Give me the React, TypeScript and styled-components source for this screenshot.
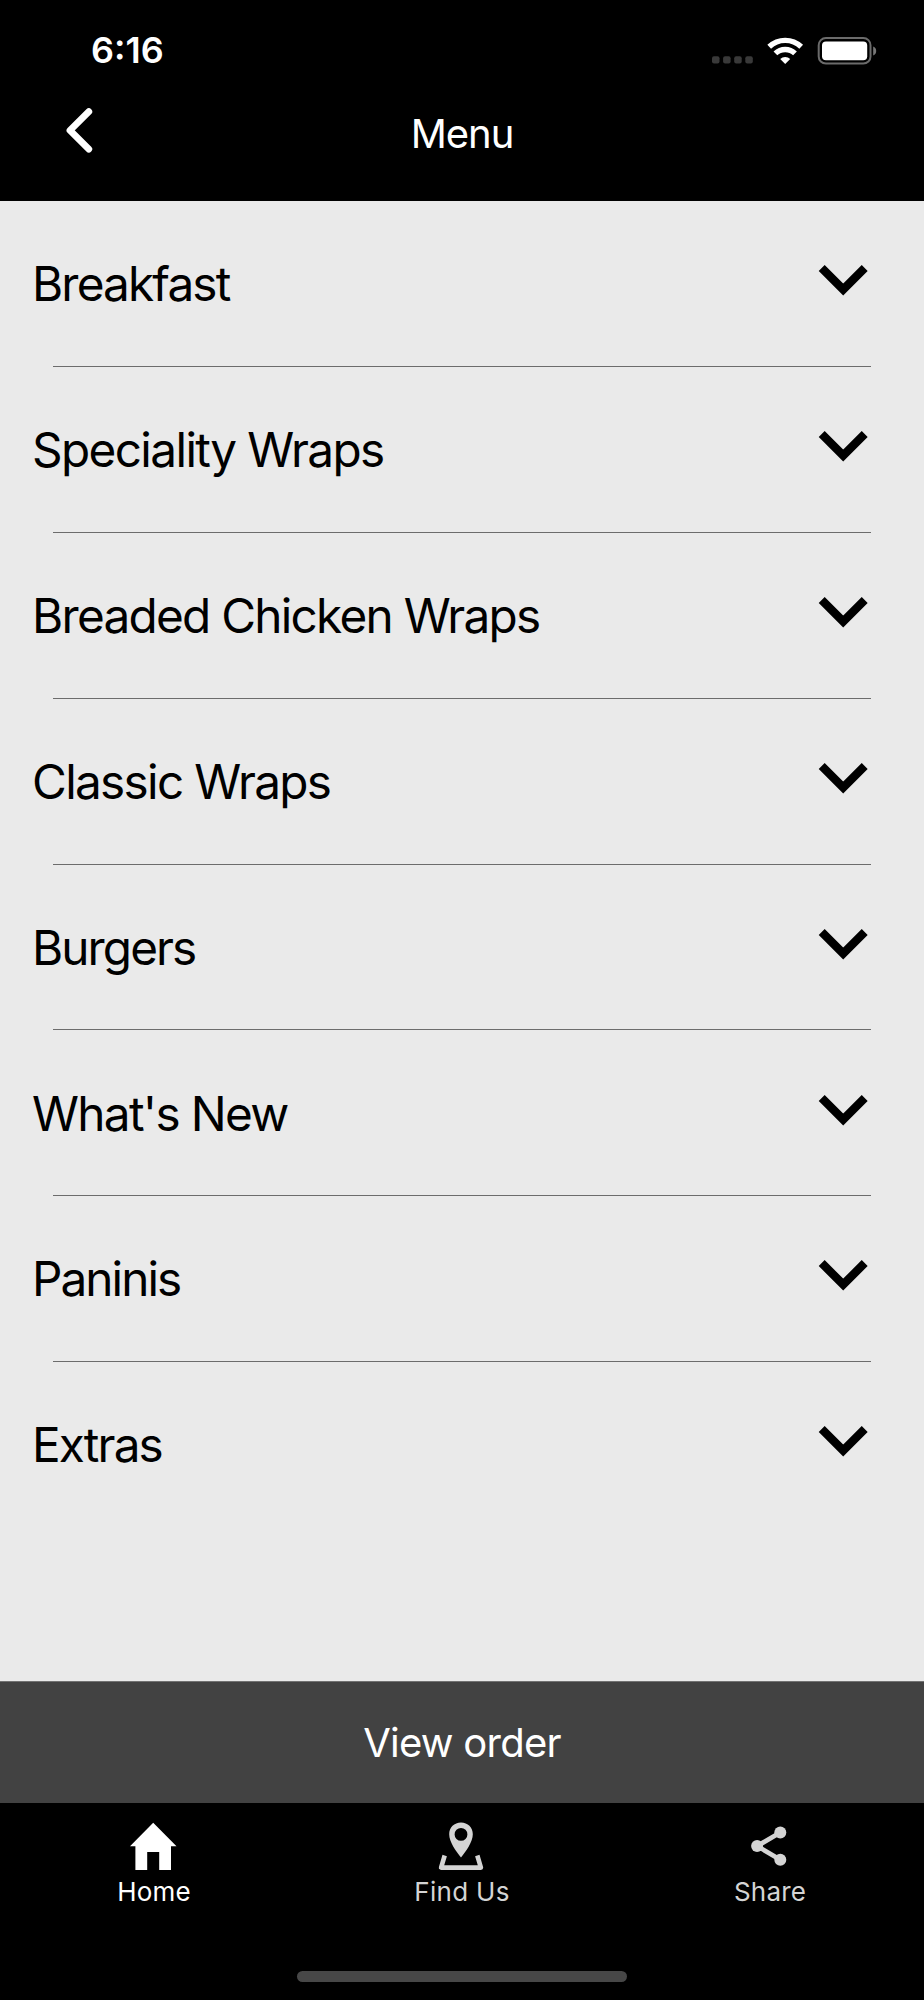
import React from "react";
import styled, { createGlobalStyle } from "styled-components";

const GlobalStyle = createGlobalStyle`
  * { box-sizing: border-box; }
  body { margin: 0; background: #000; }
  button { font: inherit; color: inherit; background: none; border: 0; margin: 0; padding: 0; }
  svg { display: block; }
`;

const Screen = styled.div`
  display: flex;
  flex-direction: column;
  width: 924px;
  height: 2000px;
  overflow: hidden;
  background: #000;
  font-family: Inter, "Liberation Sans", sans-serif;
`;

const StatusBar = styled.div`
  display: flex;
  align-items: center;
  justify-content: space-between;
  height: 101px;
  padding: 0 47px 0 91px;
  color: #fff;
`;

const Clock = styled.span`
  margin-bottom: 1px;
  font-size: 36px;
  font-weight: 600;
  line-height: 44px;
`;

const NavBar = styled.header`
  display: grid;
  grid-template-columns: 160px 1fr 160px;
  height: 100px;
  padding-bottom: 34px;
  align-items: center;
  color: #fff;
`;

const BackButton = styled.button`
  justify-self: start;
  margin: -6px 0 0 66px;
`;

const Title = styled.h1`
  margin: 0;
  text-align: center;
  font-size: 40px;
  font-weight: 400;
  line-height: 48px;
  letter-spacing: -1px;
`;

const MenuList = styled.main`
  flex: 1;
  background: #eaeaea;
`;

const Row = styled.section`
  display: flex;
  flex-direction: column;
  height: 165.9px;
`;

const RowButton = styled.button`
  flex: 1;
  display: flex;
  align-items: center;
  justify-content: space-between;
  padding: 1.4px 56px 0 32px;
  color: #000;

  svg { margin-top: -7px; }
`;

const RowLabel = styled.span<{ $spacing: number }>`
  font-size: 47.7px;
  line-height: 58px;
  white-space: nowrap;
  letter-spacing: ${(p) => p.$spacing}px;
`;

const Divider = styled.div<{ $hidden: boolean }>`
  height: 1px;
  margin: 0 53px;
  background: ${(p) => (p.$hidden ? "transparent" : "#6c6c6c")};
`;

const OrderButton = styled.button`
  height: 122px;
  border-top: 1px solid #727272;
  background: #424242;
  color: #fff;
  font-size: 40px;
  line-height: 48px;
  text-align: center;
  letter-spacing: -0.75px;
`;

const TabBar = styled.nav`
  display: grid;
  grid-template-columns: repeat(3, 1fr);
  height: 168px;
`;

const Tab = styled.button<{ $active?: boolean; $spacing: number }>`
  display: flex;
  flex-direction: column;
  align-items: center;
  padding-top: 19px;
  color: ${(p) => (p.$active ? "#fff" : "#d4d4d4")};
  font-size: 26px;
  line-height: 32px;
  letter-spacing: ${(p) => p.$spacing}px;

  span { margin-top: 2px; }
`;

const HomeIndicator = styled.div`
  width: 330px;
  height: 11px;
  margin: 0 auto 18px;
  border-radius: 6px;
  background: #474747;
`;

const StatusIcons = () => (
  <svg width="166" height="30" viewBox="711 35.5 166 30" fill="none">
    {[712, 723.1, 734.2, 745.3].map((x) => (
      <rect key={x} x={x} y="55.7" width="7.5" height="7.3" rx="2" fill="#393939" />
    ))}
    <g stroke="#fff" strokeWidth="5.4">
      <path d="M769.2 46.2A23.3 23.3 0 0 1 801.2 46.2" />
      <path d="M775.4 52.9A14.2 14.2 0 0 1 795 52.9" />
    </g>
    <path d="M785.2 63.4L780.2 58.4A7.2 7.2 0 0 1 790.2 58.4Z" fill="#fff" />
    <rect x="818.7" y="37.5" width="51.8" height="25.6" rx="7.2" stroke="#6b6b6b" strokeWidth="2" />
    <rect x="822" y="40.9" width="45.2" height="18.8" rx="4" fill="#fff" />
    <path d="M873.2 46C877.2 47.5 877.2 53.5 873.2 55Z" fill="#777" />
  </svg>
);

const BackIcon = () => (
  <svg width="28" height="46" viewBox="0 0 28 46" fill="none">
    <path d="M22.8 3.7L4 22.4L22.8 41.1" stroke="#fff" strokeWidth="6.8" strokeLinecap="round" strokeLinejoin="round" />
  </svg>
);

const ChevronDown = () => (
  <svg width="50" height="31" viewBox="0 0 50 31" fill="none">
    <path d="M3.7 3.1L25.2 24.5L46.7 3.1" stroke="#000" strokeWidth="8.4" />
  </svg>
);

const HomeIcon = () => (
  <svg width="48" height="52" viewBox="1 0 48 52" fill="currentColor">
    <path d="M24.2 .7L47.5 24.3H42V48H30.2V30H18.2V48H6.4V24.3H.9Z" />
  </svg>
);

const PinIcon = () => (
  <svg width="48" height="52" viewBox="1 0 48 52" fill="none">
    <path
      fill="currentColor"
      fillRule="evenodd"
      d="M24 .5C17.2.5 12.2 5.5 12.2 12.2C12.2 20 19 29 24 35.5C29 29 35.8 20 35.8 12.2C35.8 5.5 30.8.5 24 .5ZM24 6A6.4 6.4 0 1 1 24 18.8A6.4 6.4 0 1 1 24 6Z"
    />
    <path d="M7.7 33.5L4.1 45.6H43.9L40.3 33.5" stroke="currentColor" strokeWidth="4.6" strokeLinejoin="round" />
  </svg>
);

const ShareIcon = () => (
  <svg width="48" height="52" viewBox="-0.5 0.4 48 52" fill="currentColor">
    <path d="M33.8 10.8L10.6 24.5L33.8 38.2" fill="none" stroke="currentColor" strokeWidth="4.6" />
    <circle cx="33.8" cy="10.8" r="6" />
    <circle cx="10.6" cy="24.5" r="6" />
    <circle cx="33.8" cy="38.2" r="6" />
  </svg>
);

const categories = [
  { name: "Breakfast", spacing: -1.85 },
  { name: "Speciality Wraps", spacing: -1.62 },
  { name: "Breaded Chicken Wraps", spacing: -1.73 },
  { name: "Classic Wraps", spacing: -1.68 },
  { name: "Burgers", spacing: -1.92 },
  { name: "What's New", spacing: -1.68 },
  { name: "Paninis", spacing: -1.95 },
  { name: "Extras", spacing: -1.88 },
];

export default function App() {
  return (
    <Screen>
      <GlobalStyle />
      <StatusBar>
        <Clock>6:16</Clock>
        <StatusIcons />
      </StatusBar>
      <NavBar>
        <BackButton aria-label="Back">
          <BackIcon />
        </BackButton>
        <Title>Menu</Title>
      </NavBar>
      <MenuList>
        {categories.map((c, i) => (
          <Row key={c.name}>
            <RowButton>
              <RowLabel $spacing={c.spacing}>{c.name}</RowLabel>
              <ChevronDown />
            </RowButton>
            <Divider $hidden={i === categories.length - 1} />
          </Row>
        ))}
      </MenuList>
      <OrderButton>View order</OrderButton>
      <TabBar>
        <Tab $active $spacing={0.2}>
          <HomeIcon />
          <span>Home</span>
        </Tab>
        <Tab $spacing={0.3}>
          <PinIcon />
          <span>Find Us</span>
        </Tab>
        <Tab $spacing={0.15}>
          <ShareIcon />
          <span>Share</span>
        </Tab>
      </TabBar>
      <HomeIndicator />
    </Screen>
  );
}
